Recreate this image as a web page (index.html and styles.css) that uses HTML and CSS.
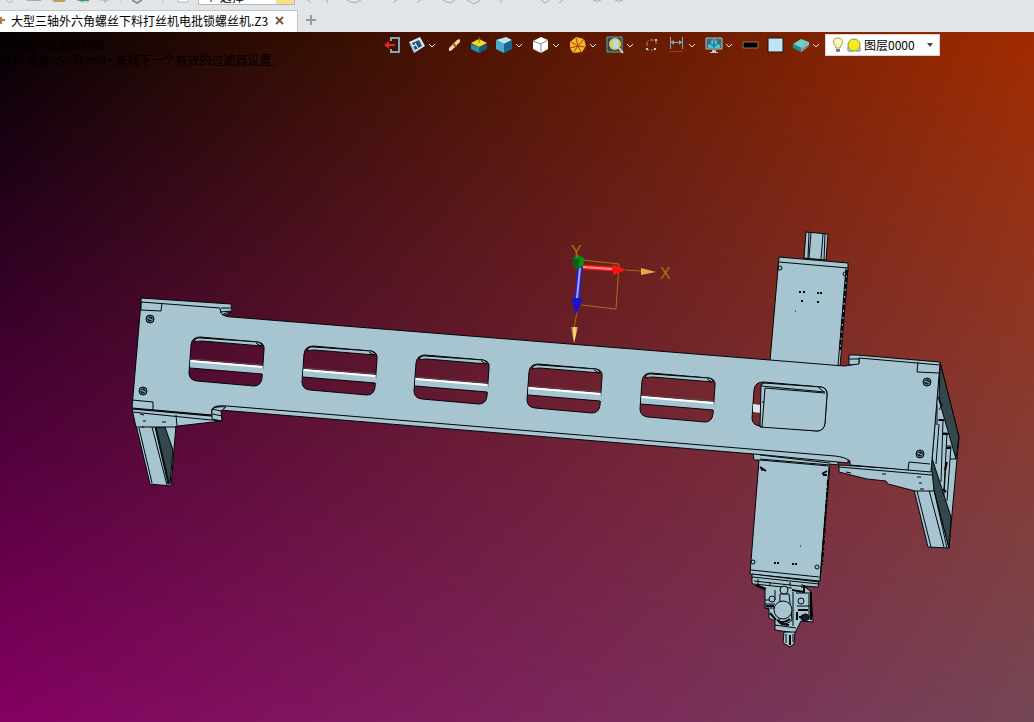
FILE: index.html
```html
<!DOCTYPE html>
<html lang="zh-CN">
<head>
<meta charset="utf-8">
<title>大型三轴外六角螺丝下料打丝机电批锁螺丝机.Z3</title>
<link rel="stylesheet" href="styles.css">
</head>
<body>
<header class="ribbon">
  <svg class="ribbon-icons" width="198" height="7" aria-hidden="true">
    <path d="M6 0l4 3 3-3" fill="none" stroke="#b9b9b9"/>
    <path d="M27 0h14v1H27z" fill="#a9abad"/>
    <path d="M52 0h14l-2 2H54z" fill="#c59a5c"/>
    <path d="M76 0h13v3l-6-1z" fill="#2f93b5"/><path d="M83 1h6v2h-6z" fill="#e6d69a"/>
    <path d="M100 0h9M105 0v3" stroke="#a0a2a4" fill="none"/>
    <path d="M121 0v3M163 0v3" stroke="#c0c2c4"/>
    <path d="M132 0l5 3 5-3" fill="none" stroke="#8d9092" stroke-width="2"/>
    <path d="M178 0v2h10V0" fill="#fff" stroke="#b5b7b9"/>
  </svg>
  <div class="pick"><span class="pick-text">个 选择</span><button class="pick-button" aria-label="选择过滤器"></button></div>
  <svg class="ribbon-icons" width="340" height="7" aria-hidden="true">
    <g fill="none" stroke="#a7aaac"><path d="M13 0l3 3M32 0v3M52 0q7 5 14 0M98 3l4-3M125 0l-3 3M148 0q7 5 12 0M172 0l7 4 6-4M206 0v3M246 0l4 3 4-3M268 0l-4 3M298 0q4 3 8 0M320 0q4 3 8 0"/></g>
  </svg>
</header>

<nav class="tabs" aria-label="文档">
  <div class="tab">
    <svg class="tab-mark" width="5" height="9" aria-hidden="true"><path d="M0 4h5M1 1v7" stroke="#ad7c43" stroke-width="2"/></svg>
    <span class="tab-title">大型三轴外六角螺丝下料打丝机电批锁螺丝机.Z3</span>
    <button class="tab-close" aria-label="关闭"><svg width="9" height="9"><path d="M1 1l7 7M8 1L1 8" stroke="#7c5a38" stroke-width="2"/></svg></button>
  </div>
  <button class="tab-add" aria-label="新建"><svg width="10" height="10"><path d="M0 5h10M5 0v10" stroke="#9a9a9a" stroke-width="2"/></svg></button>
</nav>

<main class="viewport">
  <svg class="scene" viewBox="0 32 1034 690" role="img" aria-label="三维模型">
    <defs>
      <linearGradient id="gold"><stop offset="0" stop-color="#a06a10"/><stop offset=".5" stop-color="#ffe28a"/><stop offset="1" stop-color="#b97a1c"/></linearGradient>
      <g id="bar">
        <path d="M190 360L263 366V374L190 368Z" fill="#a7c5d0" stroke="none"/>
        <path d="M191 361L262 367" stroke="#fff" stroke-width="2"/>
        <path d="M190 359L263 365" stroke="#5b4650"/>
        <path d="M190 368L262 374"/>
      </g>
      <g id="rim">
        <path class="face" d="M194 342Q196 337 201 338L258 342Q262 343 262 346L202 341Q197 341 194 342Z"/>
        <path d="M256 343l5 3"/>
      </g>
      <g id="screw"><circle r="4" fill="#607b85"/><circle r="2" fill="#1d2c32"/><path d="M-2-1l4 2" stroke="#a7c5d0"/></g>
    </defs>

    <g class="edges">
      <!-- upright column, upper half -->
      <path class="face" d="M806 232L828 234L826 260L804 258Z"/>
      <path d="M809 232L808 258M811 233L809 258M823 234L821 259M825 234L824 260"/>
      <path class="face" d="M779 257L848 263L848 269L840 367L770 361Z"/>
      <path d="M779 262L848 268M846 268L838 366"/>
      <path d="M847 270L840 350" stroke-width="2" stroke-dasharray="5 2"/>
      <circle cx="780" cy="268" r="2"/><circle cx="845" cy="274" r="2"/>
      <path d="M799 292h2M803 292h2M817 293h2M820 293h2M801 301h2M817 302h2" stroke-width="2"/><path d="M795 311h1"/>

      <!-- upright column, lower half -->
      <path class="face" d="M753 452L838 459L838 465L830 464L820 581L750 574L759 460H754Z"/>
      <path d="M760 455L830 463M760 459L830 465M759 460L829 466M829 467L820 579M751 570L819 577"/>
      <path d="M828 480L822 565" stroke-width="2" stroke-dasharray="5 3 2 2"/>
      <path d="M760 467l6 4M761 470l3-1M822 474l5-3M823 475h4" stroke-width="2"/>
      <circle cx="753" cy="562" r="2"/><circle cx="817" cy="567" r="2"/>
      <path d="M774 563h2M777 563h2M792 564h2M795 564h2" stroke-width="2"/><path d="M800 546h1"/>

      <!-- tool head -->
      <path class="face" d="M752 574L819 582L818 587L804 586L811 592L813 622L801 621L795 633L775 630L775 621L769 618L769 609L765 608L765 590L756 586L752 583Z"/>
      <path d="M752 577L819 584M754 581L808 587M754 584L792 588M758 579v5M770 582v3M790 582v4M802 584v4M765 600H774M765 604H775M765 608H774M775 590V600M793 592V626M809 594V619M796 593H811M797 606H811M775 625L796 628"/>
      <path d="M766 606h8M770 613l6 7M798 610h10M799 617h9M804 585v8M797 612v8M756 585l10 4M792 590l12 2M811 592v28" stroke-width="2"/>
      <path d="M801 616q5-4 8 0v3q-5 4-8 0z" fill="#152126"/>
      <path class="face" d="M780 594H789L792 620Q786 626 779 623Z"/>
      <circle class="face" cx="784" cy="590" r="4"/>
      <circle class="face" cx="772" cy="599" r="3"/><circle class="face" cx="801" cy="601" r="3"/>
      <circle class="face" cx="783" cy="610" r="9"/>
      <path d="M777 620q6 5 13-1M781 624l8 1" stroke-width="2"/>
      <path class="face" d="M784 632H795L794 644L790 647L783 643Z"/>
      <path d="M786 634v9M793 634v8"/><path d="M790 635v10" stroke-width="2"/>

      <!-- left support -->
      <path class="face" d="M136 425L150 484L171 486L176 425Z"/>
      <path d="M155 427L165 427L173 450L170 484L168 484Z" fill="#34474c"/>
      <path d="M139 428L152 483M152 427L167 485M156 427L169 483"/>
      <path class="face" d="M132 409L222 417V421L178 426L174 427H136Z"/>
      <path d="M132 412L221 421M176 415L177 426M140 414l4 1M143 421h3M142 427h2M162 422h4M212 418l6 1"/>

      <!-- right support -->
      <path class="face" d="M940 362L959 437L949 547L931 472Z"/>
      <path d="M940 362L959 437L956 459L939 400Z" fill="#34474c"/>
      <path d="M938 397l4 8-3 5M938 420h5l-2 62M943 433h4l-3 56M947 446h4l-4 55M939 424l-3 40M950 459h6M946 463l-3 45M937 405v20"/>
      <path d="M939 420h5M943 434h5M946 448h5M947 462l-2 8M943 489l3 3" stroke-width="2"/>
      <path class="face" d="M914 490L928 547L949 548L934 490Z"/>
      <path d="M931 455L951 517L949 548L932 482Z" fill="#34474c"/>
      <path d="M917 491L931 547M929 490L944 547M934 490L947 548"/>
      <path class="face" d="M839 465L932 471L934 491L915 491L888 484L886 481L867 479L839 472Z"/>
      <path d="M839 467L932 475M846 472l5 1M882 474h4M917 477h4M919 483h3M920 489h4"/>

      <!-- top lip and lower lip of the beam -->
      <path class="face" d="M220 405L848 456V463L754 454L220 410Z"/>
      <path class="face" d="M141 298L231 304L232 311L226 315L141 306Z"/>

      <!-- main beam with its six windows -->
      <path class="face" fill-rule="evenodd" d="M141 302L220 308L221 313Q224 317 232 317L770 360L844 366Q854 365 859 363V357L940 364L931 472L850 465V461Q845 457 835 456L227 406Q214 405 212 409V415L132 408Z
        M200 337l58 5q7 1 6 8l-2 28q-1 8-8 8l-57-5q-8-1-8-8l2-28q1-8 9-8z
        M313 346l58 5q7 1 6 8l-2 28q-1 8-8 8l-57-5q-8-1-8-8l2-28q1-8 9-8z
        M425 355l58 5q7 1 6 8l-2 28q-1 8-8 8l-57-5q-8-1-8-8l2-28q1-8 9-8z
        M538 364l58 5q7 1 6 8l-2 28q-1 8-8 8l-57-5q-8-1-8-8l2-28q1-8 9-8z
        M651 373l58 5q7 1 6 8l-2 28q-1 8-8 8l-57-5q-8-1-8-8l2-28q1-8 9-8z
        M763 382l58 5q7 1 6 8l-2 28q-1 8-8 8l-57-5q-8-1-8-8l2-28q1-8 9-8z"/>
      <path class="face" d="M849 355L857 355L940 362V365L859 358V364L849 365Z"/>
      <path d="M849 359H859M221 308H231M220 312L231 311M222 315Q228 311 232 312"/>
      <path class="face" d="M212 414V409Q216 406 226 407L221 411L222 421L212 419Z"/>
      <path d="M212 409L221 411M213 414L222 416"/>
      <path d="M141 302V310L161 311L162 303M132 400L153 402V410M918 362L917 372L939 373M930 464L909 462L908 470"/>
      <use href="#bar"/><use href="#bar" x="113" y="9"/><use href="#bar" x="225" y="18"/><use href="#bar" x="338" y="27"/><use href="#bar" x="451" y="36"/>
      <use href="#rim"/><use href="#rim" x="113" y="9"/><use href="#rim" x="225" y="18"/><use href="#rim" x="338" y="27"/><use href="#rim" x="451" y="36"/>
      <path d="M753 404L761 405V413L753 412Z" fill="#dce8ec" stroke="none"/>
      <path class="face" d="M761 385L764 383L821 387Q827 388 827 395L825 423Q824 431 817 431L760 427Z"/>
      <path d="M761 386L825 392M765 388L762 427M765 388L825 393M818 387l6 5M762 402h2M758 425l4 2"/>
      <use href="#screw" x="150" y="319"/><use href="#screw" x="143" y="391"/><use href="#screw" x="927" y="382"/><use href="#screw" x="920" y="454"/>
    </g>

    <!-- coordinate triad -->
    <g fill="none" stroke="#a9700f">
      <path d="M582 260L619 264L616 309L581 305M626 270L641 271M577 312L574 328"/>
    </g>
    <path d="M641 268L656 272L641 275Z" fill="#e2ab45"/>
    <path d="M571 327H578L574 343Z" fill="url(#gold)"/>
    <path d="M583 267L616 269" stroke="#f31616" stroke-width="5"/><path d="M583 267L612 269" stroke="#ff8f8c" stroke-width="2"/>
    <path d="M613 264L626 270L613 275Z" fill="#f31616"/>
    <path d="M580 266L577 300" stroke="#2022d8" stroke-width="5"/><path d="M580 268L577 298" stroke="#a6a8ff" stroke-width="2"/>
    <path d="M571 298L583 299L576 314Z" fill="#1616c8"/>
    <path d="M573 258l5-3 6 3v7l-5 4-6-3z" fill="#0b8a1c"/><path d="M573 258l6 2v8l-6-2z" fill="#076312"/>
    <g class="axis-label"><text x="571" y="257">Y</text><text x="660" y="279">X</text></g>
  </svg>

  <div class="hints"><p>&lt;右击&gt; 动态的视图</p><p>&lt;F8&gt;或者&lt;Shift-roll&gt; 查找下一个有效的过滤器设置.</p></div>

  <div class="toolbar" role="toolbar" aria-label="视图">
    <div class="tools">
      <button class="tool" aria-label="退出"><svg viewBox="0 0 18 18"><path d="M8 5V2h8v14H8v-3" fill="none" stroke="#7fa5b8" stroke-width="2"/><path d="M1 9l5-4v3h6v2H6v3z" fill="#dc2b1c"/></svg></button>
      <button class="tool split" aria-label="渲染"><svg viewBox="0 0 18 18"><path d="M1 6L12 1l5 9-11 7z" fill="#d6e8f1"/><path d="M4 7l7-3 3 6-7 4z" fill="#1c567e"/><path d="M7 7l3 5M4 10l4-1" stroke="#fff"/><path d="M2 7l5 9" stroke="#4088ae" stroke-dasharray="1 1"/></svg><svg class="chev" viewBox="0 0 8 8"><path d="M1 3l3 3 3-3"/></svg></button>
      <button class="tool" aria-label="擦除"><svg viewBox="0 0 18 18"><path d="M4 12l8-8 3-1v3l-8 8-3 1z" fill="#f0d68c"/><path d="M8 7l3 4" stroke="#c9402e" stroke-width="2"/><path d="M4 12l3 2-3 1z" fill="#f4f0ed"/></svg></button>
      <button class="tool" aria-label="基准面"><svg viewBox="0 0 18 18"><path d="M1 8l8 3v6l-8-4z" fill="#2590ae"/><path d="M9 11l8-3v5l-8 4z" fill="#155c80"/><path d="M1 7l8-4 8 4-8 4z" fill="#f5dc24"/><path d="M9 1v6" stroke="#56831d"/></svg></button>
      <button class="tool split" aria-label="着色显示"><svg viewBox="0 0 18 18"><path d="M1 4l10-3 6 3-8 4z" fill="#bce4f4"/><path d="M1 4l8 4v9l-8-4z" fill="#49aad5"/><path d="M9 8l8-4v9l-8 4z" fill="#1a668f"/></svg><svg class="chev" viewBox="0 0 8 8"><path d="M1 3l3 3 3-3"/></svg></button>
      <button class="tool split" aria-label="线框显示"><svg viewBox="0 0 18 18"><path d="M1 5l8-4 7 3v9l-7 4-8-4z" fill="#fff"/><path d="M1 5l8 3 7-4M9 8v9" fill="none" stroke="#888"/></svg><svg class="chev" viewBox="0 0 8 8"><path d="M1 3l3 3 3-3"/></svg></button>
      <button class="tool split" aria-label="视图方向"><svg viewBox="0 0 18 18"><path d="M1 6l6-5 8 2 2 7-4 6-9 1-3-5z" fill="#f9b524"/><path d="M2 6l7 4 6-7M9 10l7 1M9 10l-5 7M9 10l3 6M7 2l2 8-8 2" fill="none" stroke="#9c4b08"/></svg><svg class="chev" viewBox="0 0 8 8"><path d="M1 3l3 3 3-3"/></svg></button>
      <button class="tool split" aria-label="缩放"><svg viewBox="0 0 18 18"><path d="M1 1h15v15H1z" fill="#284a56" stroke="#6f9cab"/><circle cx="9" cy="8" r="6" fill="#e9c65c"/><path d="M7 4h5v8H7z" fill="#b3dded"/><path d="M13 12l4 5" stroke="#d9d0bc" stroke-width="2"/></svg><svg class="chev" viewBox="0 0 8 8"><path d="M1 3l3 3 3-3"/></svg></button>
      <button class="tool" aria-label="旋转中心"><svg viewBox="0 0 18 18"><path d="M4 6v8h6M7 4h6v6" fill="none" stroke="#829ba3" stroke-dasharray="4 2"/><path d="M12 3h2v2h-2zM3 12h2v2H3zM11 12h2v2h-2z" fill="#d9c6bd"/><path d="M4 4h2v1H4z" fill="#b92d22"/></svg></button>
      <button class="tool split" aria-label="标注"><svg viewBox="0 0 18 18"><path d="M2 1h1v12H2zM14 1h1v12h-1zM3 6h11v1H3z" fill="#7eaabd"/><path d="M3 6l3-2v5zM14 6l-3-2v5z" fill="#7eaabd"/><path d="M2 15h13v1H2z" fill="#b52d1c"/></svg><svg class="chev" viewBox="0 0 8 8"><path d="M1 3l3 3 3-3"/></svg></button>
      <button class="tool split" aria-label="显示设置"><svg viewBox="0 0 18 18"><path d="M1 2h16v11H1z" fill="#3d6f80" stroke="#a8bdc5"/><path d="M9 3l3 2v3l3 1v3H3V9l3-1V5z" fill="#48c2d2"/><path d="M6 8l3 2 3-2M9 4v8" stroke="#1b6378" fill="none"/><path d="M7 14h4v2H7zM5 16h8v1H5z" fill="#c4c8ca"/></svg><svg class="chev" viewBox="0 0 8 8"><path d="M1 3l3 3 3-3"/></svg></button>
      <button class="tool" aria-label="线条颜色"><svg viewBox="0 0 18 18"><path d="M1 6h15v6H1z" fill="#000" stroke="#8b746c"/></svg></button>
      <button class="tool" aria-label="面颜色"><svg viewBox="0 0 18 18"><path d="M1 2h15v14H1z" fill="#bfe4f6" stroke="#1b1715"/></svg></button>
      <button class="tool split" aria-label="图层管理"><svg viewBox="0 0 18 18"><path d="M1 8l8-5 8 3-8 6z" fill="#63d4cb"/><path d="M1 8l8 4v4l-8-4z" fill="#238d93"/><path d="M9 12l8-6v4l-8 6z" fill="#a9c0c3"/><path d="M9 14l8-5" stroke="#28777c"/></svg><svg class="chev" viewBox="0 0 8 8"><path d="M1 3l3 3 3-3"/></svg></button>
    </div>
    <div class="layer">
      <svg width="12" height="16" viewBox="0 0 12 16" aria-hidden="true"><path d="M4 11Q4 9 2 7Q0 1 6 1Q12 1 10 7Q8 9 8 11Z" fill="#fffbd0" stroke="#b59b1e"/><path d="M4 12h4v2L7 15H5L4 14z" fill="#777"/></svg>
      <svg width="14" height="14" viewBox="0 0 14 14" aria-hidden="true"><path d="M1 9v4h5M9 13h4V9" fill="none" stroke="#447c91"/><circle cx="7" cy="7" r="6" fill="#f4ec20" stroke="#8b9321"/></svg>
      <select class="layer-select" aria-label="图层"><option>图层0000</option></select>
      <svg class="layer-arrow" width="6" height="4" aria-hidden="true"><path d="M0 0h6L3 4z" fill="#444"/></svg>
    </div>
  </div>
</main>
</body>
</html>
```

FILE: styles.css
```css
* {
  box-sizing: border-box;
}

body {
  margin: 0;
  height: 100vh;
  display: flex;
  flex-direction: column;
  overflow: hidden;
  background: #e2e5e8;
  color: #000;
  font: 12px/16px "Noto Sans CJK SC", sans-serif;
}

button {
  padding: 0;
  border: 0;
  background: none;
}

.ribbon {
  height: 10px;
  display: flex;
  align-items: flex-start;
  overflow: hidden;
}

.ribbon-icons {
  flex: none;
}

.pick {
  width: 97px;
  height: 5px;
  display: flex;
  align-items: flex-end;
  justify-content: space-between;
  overflow: hidden;
  background: #fff;
  border: 1px solid #b4b7ba;
  border-top: 0;
}

.pick-text {
  padding-left: 6px;
  line-height: 14px;
}

.pick-button {
  width: 18px;
  height: 5px;
  background: #f8df87;
}

.tabs {
  height: 22px;
  display: flex;
  align-items: stretch;
}

.tab {
  display: flex;
  align-items: center;
  width: 298px;
  padding-bottom: 2px;
  background: #fdfdfd;
  border: 1px solid #c2c5c8;
  border-width: 1px 1px 0 0;
}

.tab-title {
  padding-left: 6px;
  white-space: nowrap;
}

.tab-close {
  display: flex;
  margin-left: 7px;
}

.tab-add {
  display: flex;
  align-items: center;
  margin-left: 8px;
  padding-bottom: 2px;
}

.viewport {
  position: relative;
  flex: 1;
  min-height: 0;
  background: linear-gradient(to right, #050203, #a22b00);
}

.viewport::before {
  content: "";
  position: absolute;
  inset: 0;
  background: linear-gradient(to right, #850062, #744756);
  mask-image: linear-gradient(to bottom, transparent, #000);
}

.scene {
  position: absolute;
  width: 100%;
  height: 100%;
}

.edges {
  fill: none;
  stroke: #000608;
  stroke-width: 1;
}

.face {
  fill: #a7c5d0;
}

.axis-label {
  fill: #a9700f;
  font: 16px "Liberation Sans", sans-serif;
}

.hints {
  position: absolute;
  top: 5px;
  left: 0;
  color: #000;
  line-height: 15px;
  white-space: nowrap;
}

.hints p {
  margin: 0;
}

.hints p:first-child {
  padding-left: 4px;
}

.toolbar {
  position: absolute;
  top: 2px;
  right: 94px;
  display: flex;
  align-items: center;
  gap: 3px;
}

.tools {
  display: flex;
  gap: 7px;
}

.tool {
  width: 18px;
  height: 18px;
  display: flex;
  align-items: center;
  gap: 2px;
}

.tool svg {
  flex: none;
  width: 18px;
  height: 18px;
}

.split {
  width: 30px;
}

.tool .chev {
  width: 8px;
  height: 8px;
  fill: none;
  stroke: #f1e4dc;
}

.layer {
  width: 115px;
  height: 22px;
  padding: 0 6px;
  display: flex;
  align-items: center;
  gap: 3px;
  background: #fff;
  border: 1px solid #d4d4d4;
}

.layer svg {
  flex: none;
}

.layer-select {
  flex: 1;
  min-width: 0;
  padding: 0;
  border: 0;
  appearance: none;
  background: none;
  color: #000;
  font: 12px/16px "Noto Sans CJK SC", sans-serif;
}
```
